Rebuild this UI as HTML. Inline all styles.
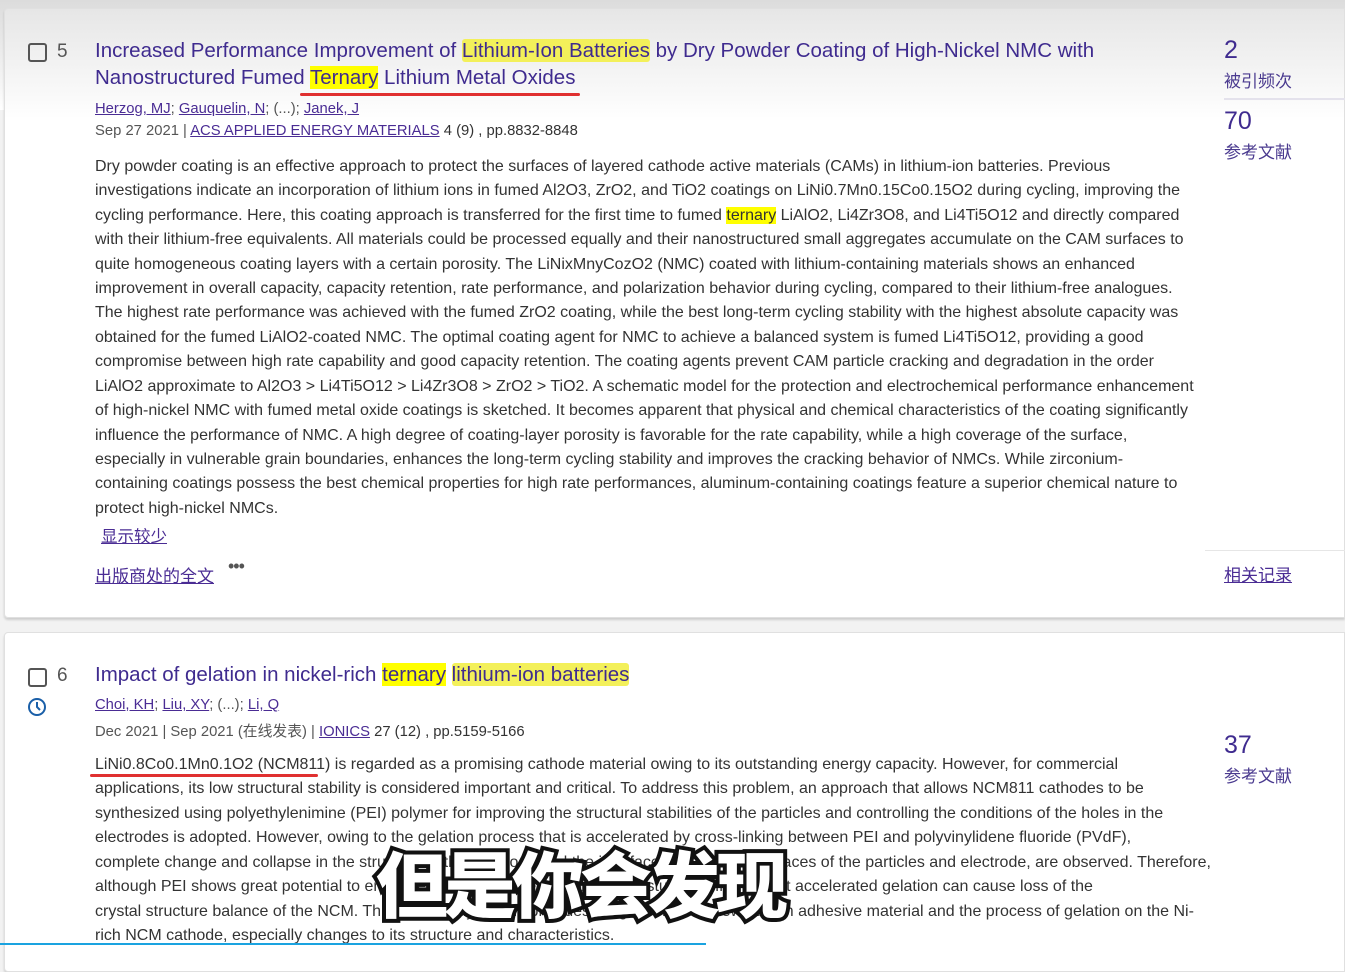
<!DOCTYPE html>
<html><head><meta charset="utf-8"><style>
*{margin:0;padding:0;box-sizing:border-box}
body{width:1345px;height:953px;overflow:hidden;background:#f2f2f2;position:relative;font-family:"Liberation Sans","Noto Sans CJK SC",sans-serif;color:#333}
.card{position:absolute;left:4px;right:0;background:#fff;border-radius:4px 0 0 4px;border:1px solid #e0e0e0;box-shadow:0 2px 2px rgba(0,0,0,.15)}
.t{position:absolute;white-space:nowrap}
.title{font-size:20.5px;color:#3f2b8f}
.hl{background:#f3f05a;border-radius:3px}
.hl2{background:#ffff00}
a,.u{color:#4a2c94;text-decoration:underline}
.meta{font-size:14.8px;color:#555}
.ab{font-size:16px;color:#333;left:95px}
.num{font-size:25px;color:#3f2b8f;left:1224px}
.lab{font-size:17px;color:#4a3a8f;left:1224px}
.cb{position:absolute;width:19px;height:19px;border:2.5px solid #555;border-radius:3px}
.idx{font-size:19px;color:#555}
</style></head><body>
<div style="position:absolute;left:0;top:0;width:1345px;height:110px;background:linear-gradient(#dcdcdc,#f6f6f6 80%,#fff)"></div>
<div class="card" style="top:8px;height:610px;background:linear-gradient(#e6e6e6,#fafafa 90px,#fff 110px)"></div>
<div class="card" style="top:632px;height:340px"></div>

<div class="cb" style="left:28px;top:43px"></div><div class="t idx" style="left:57px;top:41px">5</div>
<div class="t title" style="left:95px;top:39px">Increased Performance Improvement of <span class="hl">Lithium-Ion Batteries</span> by Dry Powder Coating of High-Nickel NMC with</div>
<div class="t title" style="left:95px;top:66px">Nanostructured Fumed <span class="hl2">Ternary</span> Lithium Metal Oxides</div>
<div style="position:absolute;left:300px;top:93px;width:280px;height:3px;background:#e03030;border-radius:2px"></div>
<div class="t meta" style="left:95px;top:101px"><a>Herzog, MJ</a>; <a>Gauquelin, N</a>; (...); <a>Janek, J</a></div>
<div class="t meta" style="left:95px;top:123px">Sep 27 2021 | <a>ACS APPLIED ENERGY MATERIALS</a> <span style="color:#333">4 (9) , pp.8832-8848</span></div>
<div class="t ab" style="top:158px">Dry powder coating is an effective approach to protect the surfaces of layered cathode active materials (CAMs) in lithium-ion batteries. Previous</div>
<div class="t ab" style="top:182px">investigations indicate an incorporation of lithium ions in fumed Al2O3, ZrO2, and TiO2 coatings on LiNi0.7Mn0.15Co0.15O2 during cycling, improving the</div>
<div class="t ab" style="top:207px">cycling performance. Here, this coating approach is transferred for the first time to fumed <span class="hl2">ternary</span> LiAlO2, Li4Zr3O8, and Li4Ti5O12 and directly compared</div>
<div class="t ab" style="top:231px">with their lithium-free equivalents. All materials could be processed equally and their nanostructured small aggregates accumulate on the CAM surfaces to</div>
<div class="t ab" style="top:256px">quite homogeneous coating layers with a certain porosity. The LiNixMnyCozO2 (NMC) coated with lithium-containing materials shows an enhanced</div>
<div class="t ab" style="top:280px">improvement in overall capacity, capacity retention, rate performance, and polarization behavior during cycling, compared to their lithium-free analogues.</div>
<div class="t ab" style="top:304px">The highest rate performance was achieved with the fumed ZrO2 coating, while the best long-term cycling stability with the highest absolute capacity was</div>
<div class="t ab" style="top:329px">obtained for the fumed LiAlO2-coated NMC. The optimal coating agent for NMC to achieve a balanced system is fumed Li4Ti5O12, providing a good</div>
<div class="t ab" style="top:353px">compromise between high rate capability and good capacity retention. The coating agents prevent CAM particle cracking and degradation in the order</div>
<div class="t ab" style="top:378px">LiAlO2 approximate to Al2O3 &gt; Li4Ti5O12 &gt; Li4Zr3O8 &gt; ZrO2 &gt; TiO2. A schematic model for the protection and electrochemical performance enhancement</div>
<div class="t ab" style="top:402px">of high-nickel NMC with fumed metal oxide coatings is sketched. It becomes apparent that physical and chemical characteristics of the coating significantly</div>
<div class="t ab" style="top:427px">influence the performance of NMC. A high degree of coating-layer porosity is favorable for the rate capability, while a high coverage of the surface,</div>
<div class="t ab" style="top:451px">especially in vulnerable grain boundaries, enhances the long-term cycling stability and improves the cracking behavior of NMCs. While zirconium-</div>
<div class="t ab" style="top:475px">containing coatings possess the best chemical properties for high rate performances, aluminum-containing coatings feature a superior chemical nature to</div>
<div class="t ab" style="top:500px">protect high-nickel NMCs.</div>
<div class="t u" style="left:101px;top:523px;font-size:16.5px">显示较少</div>
<div class="t u" style="left:95px;top:562px;font-size:17px">出版商处的全文</div>
<div class="t" style="left:228px;top:556px;font-size:18px;color:#555;letter-spacing:-1px">•••</div>
<div class="t num" style="top:36px">2</div>
<div class="t lab" style="top:67px">被引频次</div>
<div style="position:absolute;left:1224px;top:98px;width:121px;height:2px;background:#e4e2ec"></div>
<div class="t num" style="top:107px">70</div>
<div class="t lab" style="top:138px">参考文献</div>
<div style="position:absolute;left:1205px;top:550px;width:140px;height:1px;background:#e6e6e6"></div>
<div class="t u" style="left:1224px;top:561px;font-size:17px">相关记录</div>

<div class="cb" style="left:28px;top:668px"></div><div class="t idx" style="left:57px;top:665px">6</div>
<svg style="position:absolute;left:27px;top:697px" width="20" height="20" viewBox="0 0 20 20"><circle cx="10" cy="10" r="8" fill="none" stroke="#1a5fa8" stroke-width="2"/><path d="M10 5v5l3 3" fill="none" stroke="#1a5fa8" stroke-width="2"/></svg>
<div class="t title" style="left:95px;top:663px">Impact of gelation in nickel-rich <span class="hl2">ternary</span> <span class="hl">lithium-ion batteries</span></div>
<div class="t meta" style="left:95px;top:697px"><a>Choi, KH</a>; <a>Liu, XY</a>; (...); <a>Li, Q</a></div>
<div class="t meta" style="left:95px;top:720px">Dec 2021 | Sep 2021 (在线发表) | <a>IONICS</a> <span style="color:#333">27 (12) , pp.5159-5166</span></div>
<div class="t ab" style="top:756px">LiNi0.8Co0.1Mn0.1O2 (NCM811) is regarded as a promising cathode material owing to its outstanding energy capacity. However, for commercial</div>
<div style="position:absolute;left:90px;top:774px;width:228px;height:3px;background:#e03030;border-radius:2px"></div>
<div class="t ab" style="top:780px">applications, its low structural stability is considered important and critical. To address this problem, an approach that allows NCM811 cathodes to be</div>
<div class="t ab" style="top:805px">synthesized using polyethylenimine (PEI) polymer for improving the structural stabilities of the particles and controlling the conditions of the holes in the</div>
<div class="t ab" style="top:829px">electrodes is adopted. However, owing to the gelation process that is accelerated by cross-linking between PEI and polyvinylidene fluoride (PVdF),</div>
<div class="t ab" style="top:854px">complete change and collapse in the structure of the electrode and the interface between the surfaces of the particles and electrode, are observed. Therefore,</div>
<div class="t ab" style="top:878px">although PEI shows great potential to enhance the cathode performance, this study confirmed that accelerated gelation can cause loss of the</div>
<div class="t ab" style="top:903px">crystal structure balance of the NCM. Thus, this study clearly provides insights into the views as an adhesive material and the process of gelation on the Ni-</div>
<div class="t ab" style="top:927px">rich NCM cathode, especially changes to its structure and characteristics.</div>
<div class="t num" style="top:731px">37</div>
<div class="t lab" style="top:762px">参考文献</div>
<div style="position:absolute;left:0;top:943px;width:706px;height:2px;background:#1aa3e0"></div>
<div class="t" style="left:376px;top:836px;font-size:72px;font-weight:900;color:#fff;letter-spacing:-4px;-webkit-text-stroke:8px #111;paint-order:stroke fill;font-family:'Noto Sans CJK SC',sans-serif;line-height:90px">但是你会发现</div>
</body></html>
